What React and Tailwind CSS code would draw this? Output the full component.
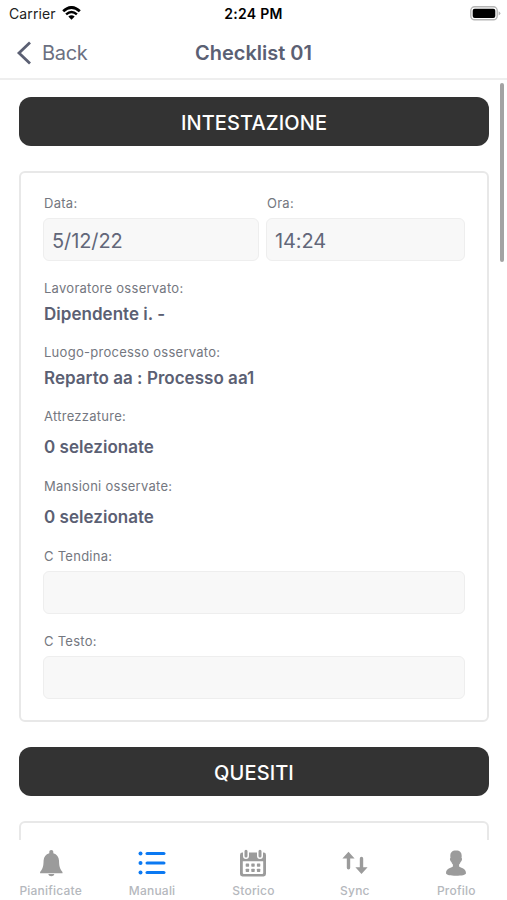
import React from 'react';

const WifiIcon = () => (
  <svg className="w-[19px] h-[15px]" viewBox="0 0 19 15" fill="none">
    <path d="M1.2 5.300 Q9.500 -2.400 17.800 5.300" stroke="#000" strokeWidth="2.800" />
    <path d="M4.100 8.400 Q9.500 3.700 14.900 8.400" stroke="#000" strokeWidth="2.500" />
    <path d="M6.300 10.600 Q9.500 8 12.700 10.600 L9.500 13.800 Z" fill="#000" />
  </svg>
);

const BatteryIcon = () => (
  <svg className="w-[31px] h-[15px]" viewBox="0 0 31 15">
    <rect x="0.8" y="0.8" width="26.4" height="13" rx="3.8" fill="#fff" stroke="#b5b5b5" strokeWidth="1.4" />
    <rect x="2.7" y="2.7" width="22.6" height="9.2" rx="2" fill="#000" />
    <path d="M28.600 5.200 Q30.400 6 30.400 7.300 Q30.400 8.700 28.600 9.400 Z" fill="#b5b5b5" />
  </svg>
);

const BellIcon = () => (
  <svg className="w-7 h-7" viewBox="0 0 28 28" fill="currentColor">
    <path d="M14.300 1c1.300 0 2 .8 2 2v1.300c3.600.9 5.500 3.700 5.700 7.200.2 5.500.6 8 3.500 11.500v1.200H3.100V23c2.900-3.500 3.300-6 3.500-11.500.2-3.500 2.100-6.300 5.700-7.200V3c0-1.200.7-2 2-2z" />
    <path d="M11.300 25.100h6c-.3 1.500-1.500 2.200-3 2.200s-2.700-.7-3-2.200z" />
  </svg>
);

const ListIcon = () => (
  <svg className="w-7 h-7" viewBox="0 0 28 28" fill="currentColor">
    <circle cx="2.500" cy="4.500" r="2" />
    <circle cx="2.500" cy="14" r="2" />
    <circle cx="2.500" cy="23.500" r="2" />
    <rect x="7.500" y="2.900" width="20" height="3.200" rx="1.600" />
    <rect x="7.500" y="12.400" width="20" height="3.200" rx="1.600" />
    <rect x="7.500" y="21.900" width="20" height="3.200" rx="1.600" />
  </svg>
);

const CalendarIcon = () => (
  <svg className="w-7 h-7" viewBox="0 0 28 28">
    <rect x="1" y="3.500" width="26" height="24" rx="2.400" fill="currentColor" />
    <path d="M3.800 12.200h20.400v11.900a1 1 0 0 1-1 1H4.800a1 1 0 0 1-1-1z" fill="#fff" />
    <path d="M7 1v6M21 1v6" stroke="#fff" strokeWidth="6" strokeLinecap="round" />
    <path d="M7 2.300v4.700M21 2.300v4.700" stroke="currentColor" strokeWidth="3" strokeLinecap="round" />
    <g fill="currentColor">
      <rect x="6.700" y="14.500" width="3.400" height="3.200" rx="0.600" />
      <rect x="12.300" y="14.500" width="3.400" height="3.200" rx="0.600" />
      <rect x="17.900" y="14.500" width="3.400" height="3.200" rx="0.600" />
      <rect x="6.700" y="19.700" width="3.400" height="3.200" rx="0.600" />
      <rect x="12.300" y="19.700" width="3.400" height="3.200" rx="0.600" />
      <rect x="17.900" y="19.700" width="3.400" height="3.200" rx="0.600" />
    </g>
  </svg>
);

const SyncIcon = () => (
  <svg className="w-7 h-7" viewBox="0 0 28 28" fill="none" stroke="currentColor" strokeWidth="3.400">
    <path d="M7.500 7v11.800M20.500 9.500v11" strokeLinecap="round" />
    <path d="M7.500 2.800l6.100 6.700H1.400zM20.500 25l-6.100-6.700h12.200z" fill="currentColor" stroke="none" />
  </svg>
);

const PersonIcon = () => (
  <svg className="w-7 h-7" viewBox="0 0 28 28" fill="currentColor">
    <path d="M14 1.500c4 0 5.700 2 5.700 5.400 0 .8-.1 1.500-.2 2.200.7.200.7 1.400.1 2.700-.3.700-.7 1-1 1.100-.3 1.100-.9 2-1.500 2.600v2c1.700 1.600 6.900 1.700 6.900 6.800 0 1.700-4.500 2.500-10 2.500S4 26 4 24.300c0-5.100 5.200-5.200 6.900-6.800v-2c-.6-.6-1.200-1.500-1.500-2.600-.3-.1-.7-.4-1-1.100-.6-1.300-.6-2.500.1-2.700-.1-.7-.2-1.400-.2-2.200 0-3.400 1.700-5.400 5.700-5.400z" />
  </svg>
);

const SectionTitle = ({ children }) => (
  <h2 className="h-[49px] shrink-0 rounded-xl bg-[#333333] pt-[2px] text-white text-[20px] font-medium tracking-[0.1px] flex items-center justify-center">
    {children}
  </h2>
);

const Label = ({ children }) => (
  <div className="h-4 pl-[1px] text-[13px] leading-4 tracking-[0.27px] text-[#747780]">{children}</div>
);

const Input = ({ value }) => (
  <div className="mt-[7px] h-[43px] rounded-md border border-[#eeeeee] bg-[#f8f8f8] px-2 pt-[1px] text-[20px] leading-[42px] tracking-[-0.1px] text-[#626779]">
    {value}
  </div>
);

const App = () => {
  const details = [
    { label: 'Lavoratore osservato:', value: 'Dipendente i. -', row: 'h-16', gap: 'mt-2' },
    { label: 'Luogo-processo osservato:', value: 'Reparto aa : Processo aa1', row: 'h-16', gap: 'mt-2' },
    { label: 'Attrezzature:', value: '0 selezionate', row: 'h-[70px]', gap: 'mt-[13px]' },
    { label: 'Mansioni osservate:', value: '0 selezionate', row: 'h-[70px]', gap: 'mt-[13px]' },
  ];

  const tabs = [
    { name: 'Pianificate', icon: BellIcon },
    { name: 'Manuali', icon: ListIcon, active: true },
    { name: 'Storico', icon: CalendarIcon },
    { name: 'Sync', icon: SyncIcon },
    { name: 'Profilo', icon: PersonIcon },
  ];

  return (
    <div className="h-[900px] w-[507px] overflow-hidden bg-white flex flex-col font-['Inter',sans-serif]">
      {/* Status bar */}
      <div className="h-[27px] shrink-0 grid grid-cols-3 items-center pl-[9px] pr-[6px] text-[14px] leading-none text-black">
        <div className="flex items-center gap-[6px] tracking-[0.1px] text-[#222222]">
          Carrier <WifiIcon />
        </div>
        <div className="pr-[3px] text-center font-semibold tracking-[0.3px]">2:24 PM</div>
        <div className="flex justify-end">
          <BatteryIcon />
        </div>
      </div>

      {/* Header */}
      <header className="h-[53px] shrink-0 grid grid-cols-[1fr_auto_1fr] items-center border-b-2 border-[#eeeeee] px-4 text-[20px] text-[#5b6073]">
        <button className="flex items-center gap-[10px] tracking-[-0.3px] text-[#6b7082]">
          <svg className="w-4 h-6 text-[#5b6073]" viewBox="0 0 16 24" fill="none" stroke="currentColor" strokeWidth="2.800">
            <path d="M14 1.500L3 12l11 10.500" />
          </svg>
          Back
        </button>
        <h1 className="font-semibold">Checklist 01</h1>
      </header>

      {/* Content */}
      <div className="flex-1 min-h-0 overflow-hidden flex">
        <main className="flex-1 flex flex-col pl-[19px] pt-[17px]">
          <SectionTitle>INTESTAZIONE</SectionTitle>

          <section className="mt-[25px] h-[551px] shrink-0 rounded-md border-2 border-[#e8e8e8] px-[22px] pt-[22px]">
            <div className="flex gap-[7px] h-[85px]">
              <div className="w-[216px]">
                <Label>Data:</Label>
                <Input value="5/12/22" />
              </div>
              <div className="flex-1">
                <Label>Ora:</Label>
                <Input value="14:24" />
              </div>
            </div>

            {details.map((item) => (
              <div key={item.label} className={item.row}>
                <Label>{item.label}</Label>
                <div className={`${item.gap} pl-[1px] text-[17px] leading-5 font-semibold tracking-[0.03px] text-[#5b6073]`}>
                  {item.value}
                </div>
              </div>
            ))}

            <div className="h-[85px]">
              <Label>C Tendina:</Label>
              <Input />
            </div>
            <div>
              <Label>C Testo:</Label>
              <Input />
            </div>
          </section>

          <div className="mt-[25px] flex flex-col">
            <SectionTitle>QUESITI</SectionTitle>
          </div>
          <section className="mt-[25px] h-[200px] shrink-0 rounded-md border-2 border-[#e8e8e8]" />
        </main>

        {/* Scrollbar */}
        <div className="w-[18px] shrink-0 flex justify-end pt-[3px] pr-[3px]">
          <div className="h-[179px] w-1 rounded-full bg-[#a3a3a3]" />
        </div>
      </div>

      {/* Tab bar */}
      <nav className="h-[60px] shrink-0 grid grid-cols-5 bg-white pt-[9px]">
        {tabs.map(({ name, icon: Icon, active }) => (
          <button key={name} className="flex flex-col items-center">
            <span className={active ? 'text-[#0b79f2]' : 'text-[#9b9b9b]'}>
              <Icon />
            </span>
            <span className="mt-[6px] text-[12px] leading-4 font-medium tracking-[0.2px] text-[#b5b8bd]">{name}</span>
          </button>
        ))}
      </nav>
    </div>
  );
};

export default App;
